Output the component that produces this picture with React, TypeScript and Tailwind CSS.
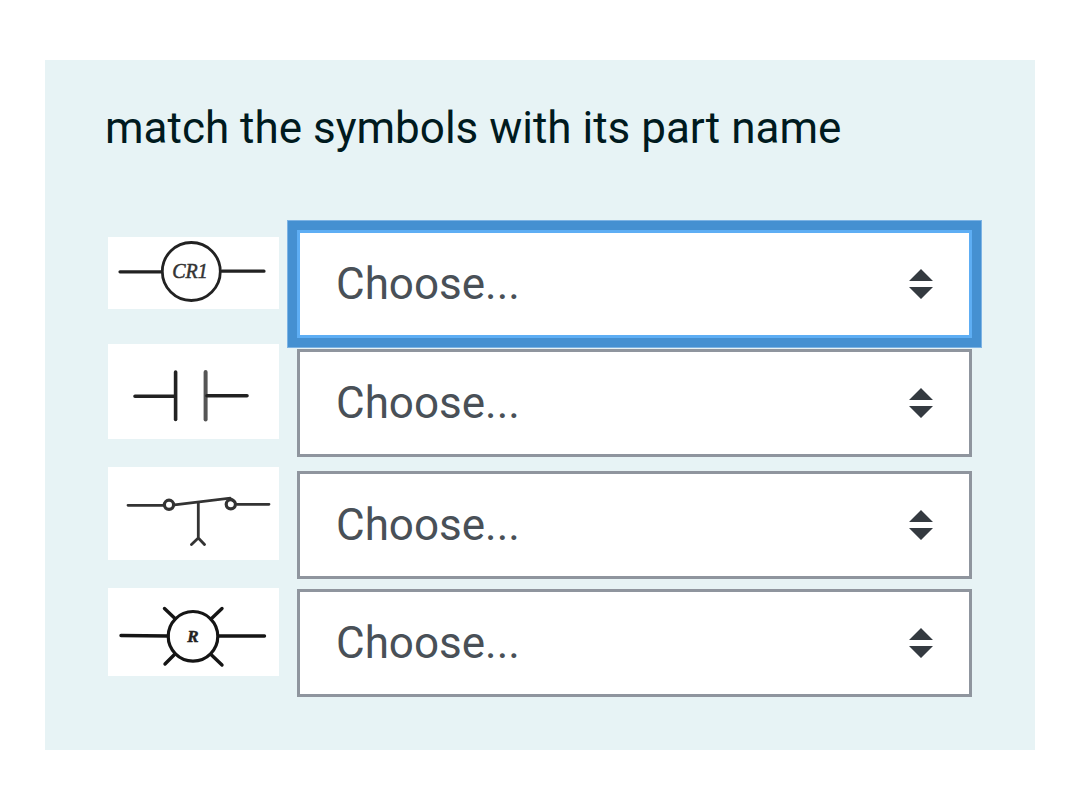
import { useState } from "react";
import type { ReactNode } from "react";
import clsx from "clsx";

type Part = {
  id: string;
  label: string;
  rowClass: string;
  imageClass: string;
  selectClass: string;
  symbol: ReactNode;
};

const CoilSymbol = () => (
  <svg viewBox="0 0 171 72" className="w-full h-full" fill="none" stroke="#222222" strokeWidth="3.2" strokeLinecap="round">
    <path d="M12 34.8H53M114 34.2H156" />
    <circle cx="83.3" cy="34.5" r="29" strokeWidth="2.8" />
    <text
      x="82"
      y="41"
      textAnchor="middle"
      className="font-['Liberation_Serif',serif] text-[20px] italic"
      fill="#333333"
      stroke="#333333"
      strokeWidth="0.5"
    >
      CR1
    </text>
  </svg>
);

const ContactSymbol = () => (
  <svg viewBox="0 0 171 95" className="w-full h-full" fill="none" stroke="#222222" strokeWidth="3.6" strokeLinecap="round">
    <path d="M97.6 28V75.5" stroke="#555555" strokeWidth="4" />
    <path d="M27 52.3H66M99 51.7H139" />
    <path d="M67.6 28V75.5" />
  </svg>
);

const FootSwitchSymbol = () => (
  <svg viewBox="0 0 171 93" className="w-full h-full" fill="none" stroke="#333333" strokeWidth="2.8" strokeLinecap="round">
    <path d="M20 38.3H56M129 37.3H161" />
    <path d="M66.5 37.8L122 31.2L126 34.5" />
    <path d="M90.3 36V71L83.5 77.5M90.3 71L96.5 77.5" />
    <circle cx="61" cy="37.8" r="4.6" strokeWidth="3.2" />
    <circle cx="122.8" cy="37.3" r="4.6" strokeWidth="3.2" />
  </svg>
);

const LampSymbol = () => (
  <svg viewBox="0 0 171 88" className="w-full h-full" fill="none" stroke="#151515" strokeWidth="3.4" strokeLinecap="round">
    <path d="M13 47.5L60 48M111 48H156.5" />
    <path d="M56.5 20.5L67 30.5M114 20.5L103 31M67 66L57 76M103 66.5L114 77" />
    <circle cx="85" cy="48.3" r="24.8" strokeWidth="3.2" />
    <text
      x="85"
      y="54"
      textAnchor="middle"
      className="font-['Liberation_Serif',serif] text-[17px] font-bold italic"
      fill="#222222"
      stroke="#222222"
      strokeWidth="0.5"
    >
      R
    </text>
  </svg>
);

const parts: Part[] = [
  {
    id: "coil",
    label: "Control relay coil",
    rowClass: "h-[114px]",
    imageClass: "h-[72px] mt-[7px]",
    selectClass: "",
    symbol: <CoilSymbol />,
  },
  {
    id: "contact",
    label: "Open contact",
    rowClass: "h-[123px]",
    imageClass: "h-[95px]",
    selectClass: "mt-[5px]",
    symbol: <ContactSymbol />,
  },
  {
    id: "switch",
    label: "Foot switch",
    rowClass: "h-[121px]",
    imageClass: "h-[93px]",
    selectClass: "mt-1",
    symbol: <FootSwitchSymbol />,
  },
  {
    id: "lamp",
    label: "Pilot lamp",
    rowClass: "h-[110px]",
    imageClass: "h-[88px]",
    selectClass: "mt-px",
    symbol: <LampSymbol />,
  },
];

const App = () => {
  const [active, setActive] = useState("coil");

  return (
    <main className="min-h-screen bg-white px-[45px] py-[60px] font-[Roboto,sans-serif]">
      <section className="bg-[#e7f3f5] px-[63px] pt-9 pb-[52px]">
        <h1 className="-ml-[3px] mb-[70px] text-[44px] leading-[64px] text-[#001a1e]">
          match the symbols with its part name
        </h1>

        <form>
          {parts.map((part) => (
            <div key={part.id} className={clsx("flex items-start gap-[18px]", part.rowClass)}>
              <label
                htmlFor={part.id}
                aria-label={part.label}
                className={clsx("block w-[171px] shrink-0 bg-white", part.imageClass)}
              >
                {part.symbol}
              </label>
              <div className={clsx("relative flex-1", part.selectClass)}>
                <select
                  id={part.id}
                  onFocus={() => setActive(part.id)}
                  className={clsx(
                    "block w-full h-[108px] appearance-none border-3 bg-white pl-9 pr-20 text-[44px] text-[#495057] outline-none",
                    active === part.id
                      ? "border-[#5eaef4] shadow-[0_0_0_9px_#4590d1,0_0_0_10px_#7db3e4]"
                      : "border-[#8f959e]"
                  )}
                >
                  <option>Choose...</option>
                </select>
                <svg
                  viewBox="0 0 24 30"
                  className="pointer-events-none absolute right-[39px] top-[39px] h-[30px] w-6"
                  fill="#343a40"
                >
                  <path d="M12 0L24 12H0ZM0 18H24L12 30Z" />
                </svg>
              </div>
            </div>
          ))}
        </form>
      </section>
    </main>
  );
};

export default App;
